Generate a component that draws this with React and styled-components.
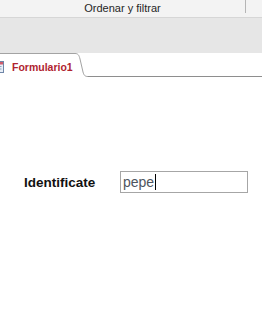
import React from 'react';
import styled, { createGlobalStyle } from 'styled-components';

const GlobalStyle = createGlobalStyle`
  html, body {
    margin: 0;
    padding: 0;
    background: #ffffff;
  }
  body {
    width: 262px;
    height: 332px;
    overflow: hidden;
    font-family: "Liberation Sans", Arial, sans-serif;
  }
`;

export default function App() {
  return (
    <Page>
      <GlobalStyle />
      <RibbonGroup>
        <GroupLabel>Ordenar y filtrar</GroupLabel>
        <GroupSeparator />
      </RibbonGroup>
      <Band />
      <TabStrip>
        <Tab>
          <FormIcon width="12" height="12" viewBox="0 0 12 12">
            <rect x="0.5" y="0.5" width="11" height="11" fill="#e8eef6" stroke="#6f86a8" />
            <rect x="1" y="1" width="10" height="2.5" fill="#d05a6a" />
            <rect x="2.5" y="5" width="7" height="1" fill="#8ea3c2" />
            <rect x="2.5" y="7.5" width="7" height="1" fill="#8ea3c2" />
          </FormIcon>
          <TabLabel>Formulario1</TabLabel>
        </Tab>
        <TabCurve width="16" height="24" viewBox="0 0 16 24">
          <path
            d="M0 0.5 H3 C6 0.5 7 2 8 6 L11 19 C12 22.5 13 23.5 16 23.5"
            fill="none"
            stroke="#a3a3a3"
          />
        </TabCurve>
        <TabFiller />
      </TabStrip>
      <FormBody>
        <FieldRow>
          <FieldLabel>Identificate</FieldLabel>
          <TextBox>
            pepe<Caret />
          </TextBox>
        </FieldRow>
      </FormBody>
    </Page>
  );
}

// ----- Styled
const Page = styled.div`
  display: flex;
  flex-direction: column;
  width: 262px;
  height: 332px;
  background: #ffffff;
`;

const RibbonGroup = styled.div`
  display: flex;
  align-items: flex-start;
  height: 17px;
  background: #f3f3f3;
  border-bottom: 1px solid #d6d6d6;
`;

const GroupLabel = styled.div`
  width: 245px;
  height: 17px;
  line-height: 17px;
  text-align: center;
  font-size: 11px;
  color: #262626;
  padding-left: 0;
  box-sizing: border-box;
`;

const GroupSeparator = styled.div`
  width: 1px;
  height: 13px;
  background: #b5b5b5;
`;

const Band = styled.div`
  height: 35px;
  background: #e6e6e6;
`;

const TabStrip = styled.div`
  display: flex;
  height: 24px;
  background: #ffffff;
  overflow: hidden;
`;

const Tab = styled.div`
  display: flex;
  align-items: center;
  gap: 8px;
  width: 72px;
  box-sizing: border-box;
  border-top: 1px solid #a3a3a3;
  padding-top: 3px;
`;

const FormIcon = styled.svg`
  flex: none;
  margin-left: -8px;
`;

const TabLabel = styled.span`
  font-size: 10.5px;
  font-weight: bold;
  color: #b0232f;
  white-space: nowrap;
`;

const TabCurve = styled.svg`
  flex: none;
  display: block;
`;

const TabFiller = styled.div`
  flex: 1;
  border-bottom: 1px solid #8e8e8e;
`;

const FormBody = styled.div`
  flex: 1;
  padding-top: 94px;
`;

const FieldRow = styled.div`
  display: flex;
  align-items: center;
  padding-left: 24px;
`;

const FieldLabel = styled.div`
  width: 96px;
  font-size: 13.5px;
  font-weight: bold;
  color: #111111;
`;

const TextBox = styled.div`
  display: flex;
  align-items: center;
  width: 128px;
  height: 22px;
  box-sizing: border-box;
  border: 1px solid #a6a6a6;
  padding-left: 2px;
  font-size: 14px;
  color: #4e5560;
`;

const Caret = styled.span`
  display: inline-block;
  width: 1px;
  height: 16px;
  margin-left: 1px;
  background: #000000;
`;
